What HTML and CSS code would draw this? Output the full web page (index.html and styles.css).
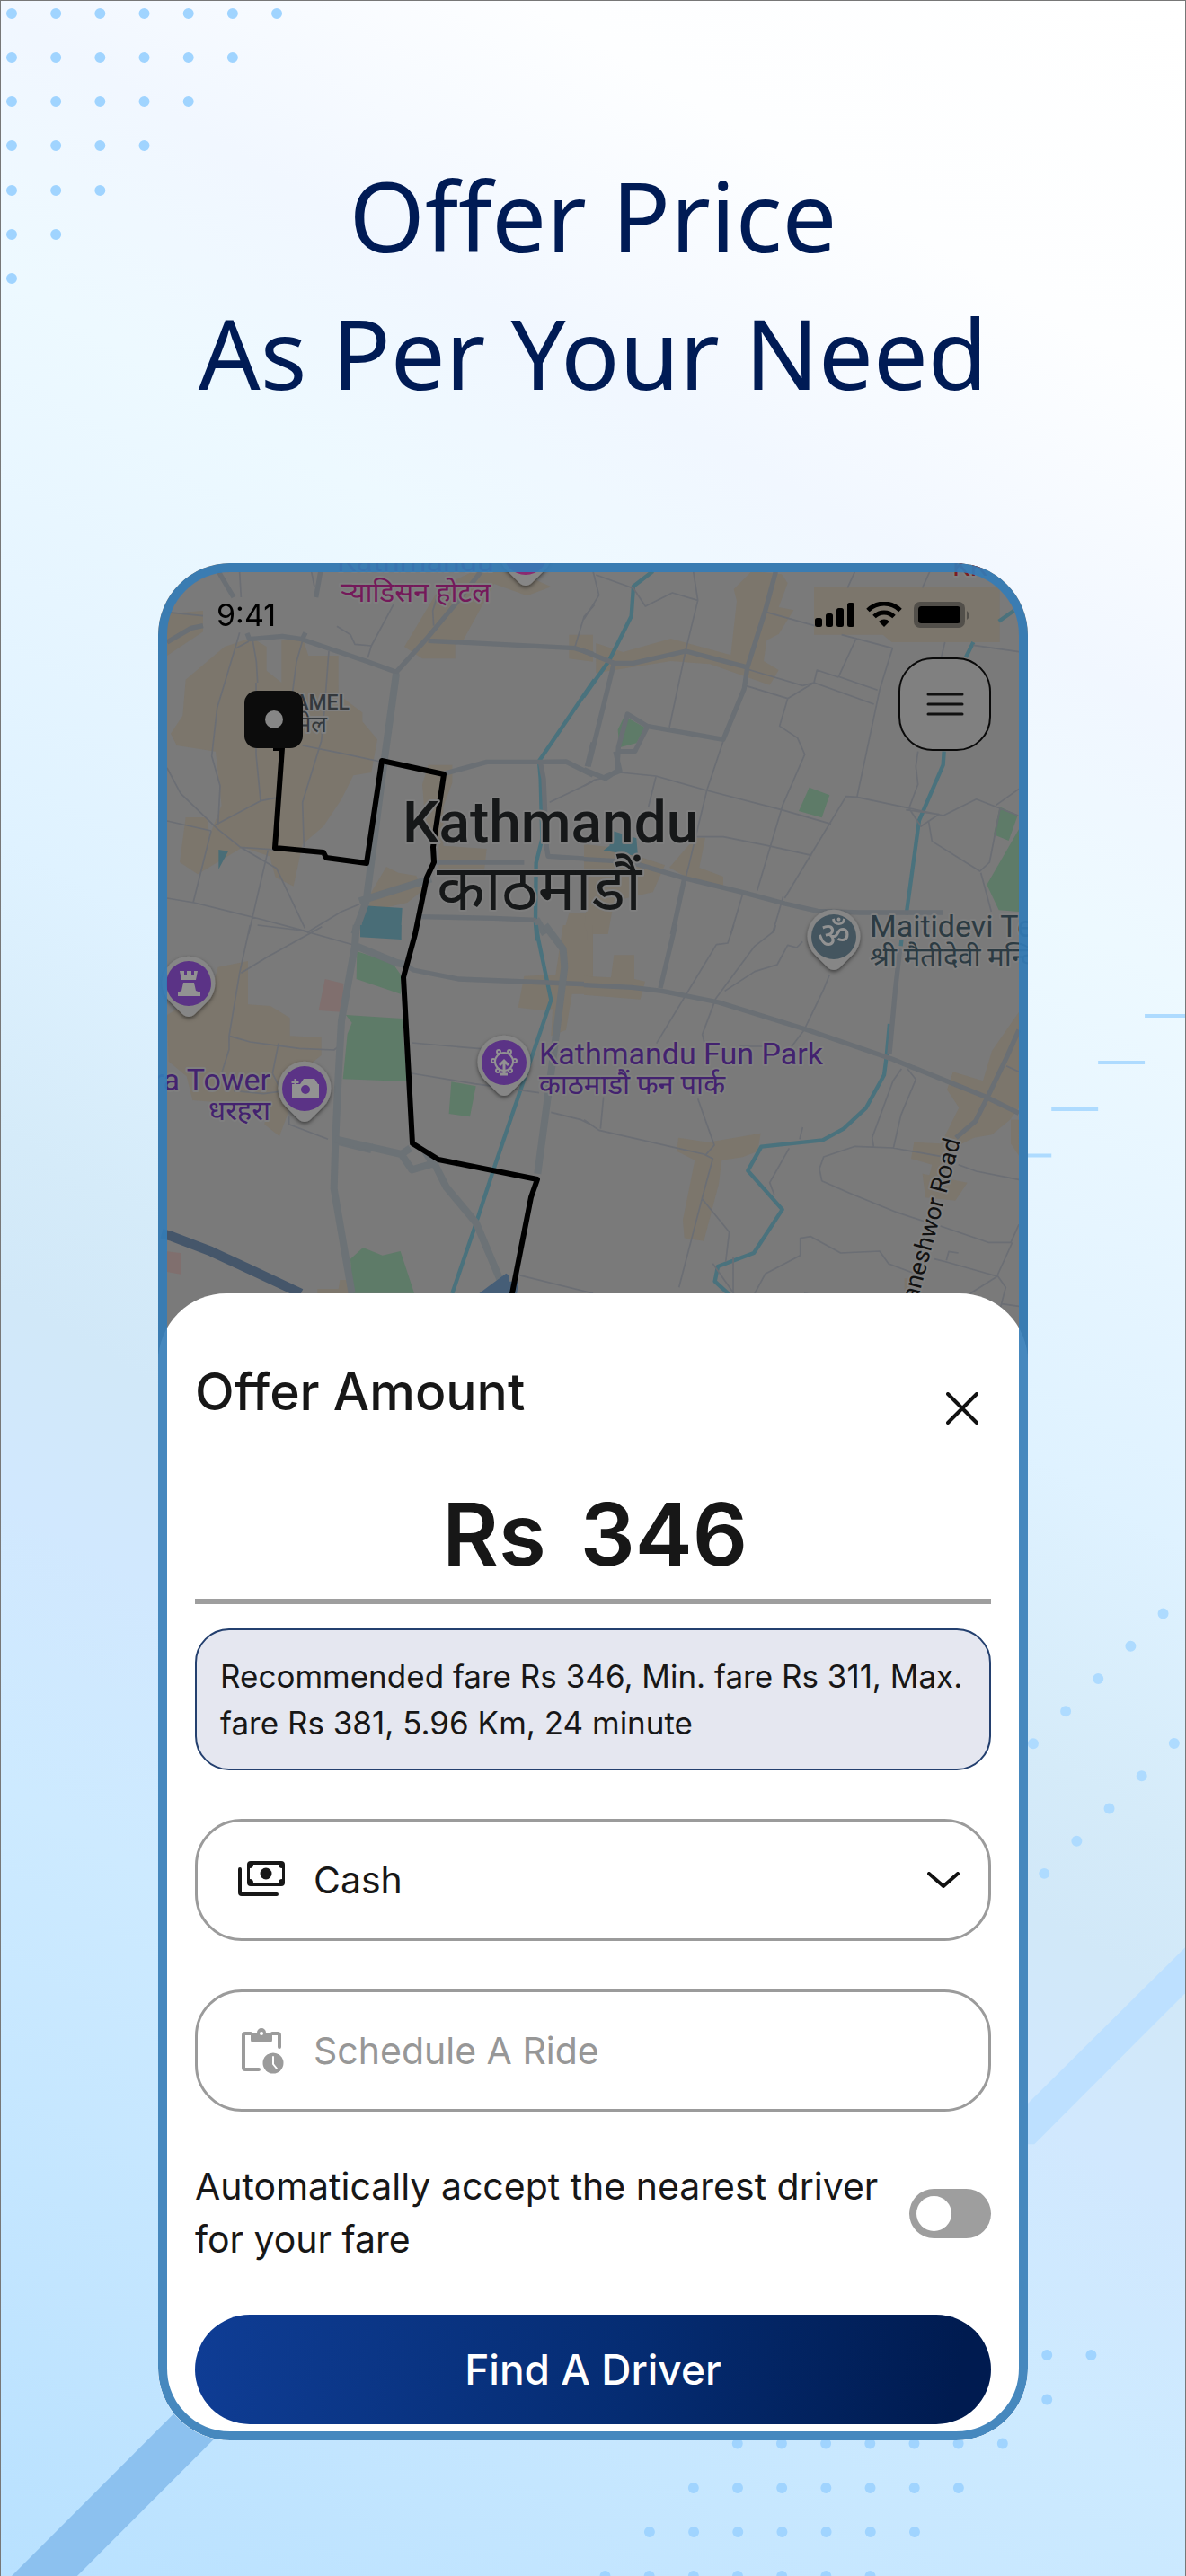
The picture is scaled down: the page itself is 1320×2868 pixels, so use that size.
FILE: index.html
```html
<!DOCTYPE html>
<html lang="en">
<head>
<meta charset="utf-8">
<meta name="viewport" content="width=device-width, initial-scale=1">
<title>Offer Price As Per Your Need</title>
<link rel="stylesheet" href="styles.css">
</head>
<body>
<div class="poster">
  <svg class="decor" viewBox="0 0 1320 2868" preserveAspectRatio="none" aria-hidden="true">
    <g class="decor-dots">
      <path d="M12 14h296M12 63h247M12 112h198M12 161h149M12 211h100M12 260h50M12 309h1"/>
      <path d="M1166 2622h50M1166 2671.500h1M821 2720.500h296M772 2770h296M723 2819h296M673.500 2868h296"/>
    </g>
    <path class="decor-diagonal" d="M1150.700 1941l182-182M1163 2085.600l182-182"/>
    <path class="decor-dash" d="M1275 1130.500h45M1223 1182.500h52M1171 1234.500h52M1119 1286h52"/>
    <path class="band-light" d="M1320 2168L1100 2386v1h52l168-168z"/>
    <path class="band-strong" d="M12 2868L240 2640h73L85 2868z"/>
  </svg>

  <h1 class="headline">Offer Price<br>As Per Your Need</h1>

  <main class="phone">
    <section class="map" aria-label="Map of Kathmandu">
      <svg class="map-canvas" viewBox="176 627 968 900">
        <defs>
          <g id="pin"><path d="M0 37C-4 37-7 34-10 31L-21 20A29.500 29.500 0 1 1 21 20L10 31C7 34 4 37 0 37z"/></g>
          <filter id="shade" x="-30%" y="-30%" width="160%" height="160%"><feDropShadow dx="0" dy="2" stdDeviation="2" flood-opacity=".5"/></filter>
        </defs>
        <rect x="176" y="627" width="968" height="900" fill="#7a7a7a"/>

        <!-- north-west quarter -->
        <g transform="translate(160 610) scale(.33333)">
          <g class="built">
            <path d="M78 220l120-10v70l-120 80zM270 330l90-30 50 30v80l50 40v-140l70-10 20 60h100v130l80 60v30l50 60-20 110-60 10-40 80-60 90-70 60-30 140-60-30-20-70-90-30-150 90-60-40 20-150h70l10 60 40-100-20-180-130-20-20-40 40-60 10-120z"/>
            <path d="M990 130l130-60 60-20 180 80-80 30-110-40-110 200h-20v50h-110l-60-40zM930 790l20-65h80v60l-30 80v130l145 10-10 90-150-20v-100h-40zM1420 290h80v90l-80-10zM760 1150l50-85 40 20 60 10 20 50-50 40-130 30z"/>
            <path d="M1400 1290l20-70h80v70z"/>
          </g>
          <path class="water" d="M250 1008l32 5-32 60zM735 1195l128 8-5 90h-135z"/>
          <path class="river" d="M1505 440L1320 712l5 60 5 200-20 80-2 200 5 60"/>
          <path class="minor" d="M320 80l5 85M560 80l10 50M78 215l120 12M380 450l-4-70-12-70M320 283l-15 52-60 200-18 160 28 100-7 130M308 335l42-22M530 310l-20 70-30 230M618 345l-15 200-10 100-63 205 5 150M375 450v240l15 155 60-12M240 925l150-80M78 735l45 85 125 120 75 60 120 70 95 200M225 945l-60 240M78 912l147 33M320 1000l120 8M415 1010l-65 280M78 1170l90 15 230 57 150 40M530 660l130 26 130 28M545 1285l115-70 60-25M645 262l45 28 15 32 55 5 75-140M760 327l-12 40M980 160l-15 50 3 50M1440 330l30-100 35-40M1355 850l145-70"/>
          <path class="major" d="M78 315l80-47 40-8M250 80l50 85M590 80l-15 85M540 283l-10 20M345 285l8 20 110-10 65 10 220 75 95 35 100-110 100-120 90-115M950 310l490 25 60 20M845 415l-45 300M1000 755l145-40h175l90-1 90 45M1500 650l-20 80M1325 720l10 50 10 230 5 30 150 10M970 1050h300M920 1232l250 5 140 6"/>
          <path class="trunk" d="M843 420l-40 290-60 470-40 110M720 1180l240-75M1310 1240l30 50"/>
        </g>

        <!-- north-east quarter -->
        <g transform="translate(650 610) scale(.33333)">
          <g class="built">
            <path d="M560 78l100 10 20 30-30 80 50 10-50 80-40 20-10 70 50 30-30 50-200-70-130-10-250 40v-100l90 30 160-45 200 55 20-180-10-40zM375 968h30l-20 100 80 30v40l-90-20-90-50 60-70zM768 130h620v185h-360l-30-25h-230z"/>
            <path d="M0 1290l10-120-10-40v-140l90 10 180 60-40 90-130 30-20 110z"/>
          </g>
          <path class="green" d="M135 562l68 38-28 52-57 15-5-60zM752 800l68 26-26 75-77-22zM1388 865l60 28-30 85-50-20zM1452 940v275l-67-5-40-85z"/>
          <path class="water" d="M95 945l80 25 5 60-115-20 20-15z"/>
          <path class="river" d="M230 78l-65 50-7 100-75 150-85 120M1435 210l-50 35M1300 315l-25 50M1202 680l-3 45-80 185-43 315"/>
          <path class="minor" d="M30 78l20 80-50 80M40 90l125 45 40 60 90-45 85 25-15-97M380 175l-40 165-55 260M610 215l160 45M905 78l-25 55M1155 78l-25 55M860 290l170 45M910 300l-60 130 130 45M545 405l185 55M1030 335l-28 90-15 50-75 355M730 460l38-10 10-42 72 24M768 450l-88 53-140-43M768 450l200 72M680 503l-27 92 60 40 24 55-74 170-85 285M120 750l120 12 170 48 250 65 165 47M240 765l-25 100M465 645l-55 165-60 250-60 230M375 965h90l150 30 145 32M0 795l35-20 35-8M910 832l-35-2-205 340M910 832l290 62 110-55 140 55M1115 680l-7 50 7 60-30 80 40 60 60-40-110-15M1375 860l77-55M1150 910l12 70 160 100 32-30 35-180M1325 1085l35 130M1205 315l-12 50M1300 325l152 22M530 1155l-40 135M665 1165l-35 120"/>
          <path class="major" d="M0 345l100 40h65l175-40 210 55M640 80l-35 130-60 190-10 70-70 170-255-45-65-40-30 110-5 80-38 25-72-30M100 385L15 730M110 680h60l40-80M105 680l15 65-50 20M335 1105l-40 185"/>
          <path class="major" d="M0 1040l150 8 185 55 205 50 130 35 110 25 140 5h280"/>
        </g>

        <!-- south-west quarter -->
        <g transform="translate(160 1030) scale(.33333)">
          <g class="built">
            <path d="M78 300l150-90 20-70 100-20v145l75 5 65 40v60l105 5v60l-50 40-50 20-10 130-30 80-50-40 10-60-250-20-20-80-60-50zM1270 170l120-5v110l-60 10-80-10zM1400 0h100v230h-70l-20 120-50 20 10-170zM580 1230v-15h70l5-30h35v45z"/>
          </g>
          <path class="rose" d="M605 180l62 15-5 95-78-5zM78 1090l48 6-3 70-45-8z"/>
          <path class="green" d="M712 88l118 38 28 40v64l-148-50zM675 300l188 12 15 210-213-8 15-150 15-38zM1027 523l82 15-20 102-70-10zM690 1115l42-38 65 26 60-14 46 140h-205z"/>
          <path class="water" d="M723 0h137v48l-137-8z"/>
          <path class="river" d="M1310 0l8 50 42 200-190 560-62 190-78 230"/>
          <path class="minor" d="M355 0l-35 160-35 210v45l-25 80M325 160l90-55 180-100M380 0l150 18 170 48M285 370l70 20 165 22 115 5 20-15M450 395l-20 100 30 60-60 8-100-10M485 640v25l130 50M895 393l230 20M895 495l210 35 215 30M1360 625l100 25 40 20M1250 1168l250 62"/>
          <path class="major" d="M870 130l30 20 150 30 450 18"/>
          <path class="trunk" d="M710 0l-5 70-45 250-10 180-10 220-5 160 60 350M705 68l140 58 25 5M640 720l120 30M1340 0l60 80 5 60-30 240-60 450"/>
          <path class="trunk" d="M640 715l220 50 30-20M860 765l35 52 70-20-25-40M760 745l10-5M970 795l40 80 100 120 80 190"/>
          <path class="rail" d="M60 1030l35 10 130 50 130 60 170 80"/>
          <path fill="#465e77" d="M1120 1230l40-30 50-37 10 7-5 60zM1215 1230v-40h36l-5 40z"/>
        </g>

        <!-- south-east quarter -->
        <g transform="translate(650 1030) scale(.33333)">
          <g class="built">
            <path d="M0 170l90 5 10-75h68v80l36 8-16 60-188-15zM315 710l100 15 175-30-10 60-50 20-70 10-10 80-50 190-65-10-5-60 40-200-60-30zM1452 290v320l-30 40-60 50-60 10-80 40-20 90-60 40 20-80-70-20 10-55 90 5 60-120-40-60 20-60 100 30 30-100zM1130 830l150 30-40 60-100-10zM1070 1180h30l-10 50h-20zM1425 650h27v120l-27-40z"/>
            <path d="M0 0l10 20v30h-10z"/>
          </g>
          <path class="river" d="M1060 50l-2 20M1020 330l-10 110-8 60-60 110-75 70-70 38-205 22-45 80 115 130-95 145-120 45-10 50 55 50"/>
          <path class="minor" d="M500 0l-20 60-38 5-200 330M640 0l-5 20-65 50-130 175-45 120 15 60M470 220l100-65 75-23 35-65 30 8 20-20M820 165l-20 50-65 135-60 80M600 405h-80M65 575l-10 105M0 650l50 35 350 80 30 15-35 130-78 300M380 580l55 155-28 32M395 915l90 110-12 100M730 675l-10 40M685 745l-65 115 15 40M1060 480l-28 40-70 190 5 30M1080 480l28 35-50 120-25 110M1190 772l-160-28-125-5-105 35-14 40 8 40 90 40 160 65 90 30M1250 800l60 22 142 28M1190 1005l160 55h75l27-60M1410 470l42 20M1430 1060l-50 110 28 40-18 70M570 1230l35-65 117-62v-57l35-6 100 55 130-6 30 42 80 30M1170 1115l40 10 170 48M1210 1120l8-30 32 5M1380 1173l-90 57M1395 1265l57 8M498 1110v120M430 1130l70 100M735 1230l60 8"/>
          <path class="major" d="M305 0l-50 210M0 200l160 8 100 12 190 38 290 90 290 100 310 125 112 55M1055 80l-15 130-20 220M1452 350l-40 90-65 135-40 80-65 55"/>
        </g>

        <path class="route" d="M304 833h10L306 944l54 5 3 6 45 6L425 847l69 15-12 81 1 17-8 17-13 63-13 48 10 185 29 18 110 22-7 20-21 107v60"/>

        <text class="place city" x="448" y="938">Kathmandu</text>
        <text class="place city-local" x="486" y="1013">काठमाडौं</text>
        <text class="place poi hotel" x="375" y="636">Kathmandu</text>
        <text class="place local hotel" x="379" y="670">र्‍याडिसन होटल</text>
        <text class="place local hospital" x="1060" y="641">KK</text>
        <text class="place district" x="389" y="790" text-anchor="end">THAMEL</text>
        <text class="place district-local" x="364" y="815" text-anchor="end">थमेल</text>
        <text class="place poi temple" x="968" y="1043">Maitidevi Temple</text>
        <text class="place local temple" x="968" y="1076">श्री मैतीदेवी मन्दिर</text>
        <text class="place poi park" x="600" y="1185">Kathmandu Fun Park</text>
        <text class="place local park" x="600" y="1218">काठमाडौं फन पार्क</text>
        <text class="place poi park" x="301" y="1214" text-anchor="end">Dharahara Tower</text>
        <text class="place local park" x="301" y="1247" text-anchor="end">धरहरा</text>
        <text class="place street" transform="translate(1069 1270) rotate(-75)" text-anchor="end">Baneshwor Road</text>

        <g fill="#868686" filter="url(#shade)">
          <use href="#pin" x="585" y="615"/><use href="#pin" x="210" y="1095"/><use href="#pin" x="339" y="1212"/><use href="#pin" x="561" y="1183"/><use href="#pin" x="928" y="1043"/>
        </g>
        <circle cx="585" cy="615" r="25" fill="#8a2a70"/>
        <circle cx="928" cy="1043" r="25" fill="#44555f"/>
        <g fill="#5b3386"><circle cx="210" cy="1095" r="25"/><circle cx="339" cy="1212" r="25"/><circle cx="561" cy="1183" r="25"/></g>
        <text class="om" x="928" y="1055" text-anchor="middle">ॐ</text>
        <g fill="#929292">
          <path d="M200 1081h5v4h3v-4h5v4h3v-4h4l-2 10h-16zM204 1094h12l2 9 5 2v4h-25v-4l4-2z"/>
          <path fill-rule="evenodd" d="M325 1207h9l4-6h12l4 6h1v16h-30zM340 1208a5 5 0 1 0 0 10 5 5 0 0 0 0-10z"/>
          <path d="M327.500 1201h2v3h3v2h-3v3h-2v-3h-3v-2h3z"/>
        </g>
        <g fill="none" stroke="#929292" stroke-width="2">
          <circle cx="561" cy="1182" r="10"/><path stroke-width="3" d="M561 1182v14M557 1196h8M556 1186l5-5 5 5"/>
          <circle cx="555" cy="1171" r="2"/><circle cx="567" cy="1171" r="2"/><circle cx="549" cy="1181" r="2"/><circle cx="573" cy="1181" r="2"/><circle cx="554" cy="1192" r="2"/><circle cx="568" cy="1192" r="2"/>
        </g>
        <rect x="272" y="769" width="65" height="64" rx="14" fill="#0c0c0c"/>
        <circle cx="305" cy="801" r="10" fill="#868686"/>
      </svg>

      <div class="status">
        <time class="clock">9:41</time>
        <svg class="status-icons" viewBox="0 0 172 30" role="img" aria-label="Signal, Wi-Fi and battery">
          <rect x="0" y="18" width="8" height="10" rx="2.500"/><rect x="12" y="13" width="8" height="15" rx="2.500"/><rect x="24" y="7" width="8" height="21" rx="2.500"/><rect x="36" y="1" width="8" height="27" rx="2.500"/>
          <g fill="none" stroke="#000" stroke-width="5"><path d="M59 9.500a25.500 25.500 0 0 1 36 0"/><path d="M66 16.500a15.500 15.500 0 0 1 22 0"/></g>
          <path d="M77 28l-6-6a8.500 8.500 0 0 1 12 0z"/>
          <rect x="110" y="0" width="57" height="29" rx="7" fill="#524f4a"/><rect x="115" y="5" width="47" height="19" rx="3.500"/><path fill="#524f4a" d="M169 10q6 5 0 10z"/>
        </svg>
      </div>
      <button class="menu" type="button" aria-label="Menu">
        <svg viewBox="0 0 42 28"><path d="M2 3h38M2 14h38M2 25h38"/></svg>
      </button>
    </section>

    <form class="sheet">
      <header class="sheet-head">
        <h2 class="sheet-title">Offer Amount</h2>
        <button class="close" type="button" aria-label="Close"><svg viewBox="0 0 36 36"><path d="M2 2l32 32M34 2L2 34"/></svg></button>
      </header>

      <div class="amount">
        <label for="amount">Rs</label>
        <input id="amount" type="text" inputmode="numeric" value="346">
      </div>

      <p class="fare">Recommended fare Rs 346, Min. fare Rs 311, Max. fare Rs 381, 5.96 Km, 24 minute</p>

      <div class="stack">
        <div class="field">
          <svg class="field-icon" viewBox="0 0 54 54" aria-hidden="true">
            <path fill="none" stroke="#171717" stroke-width="4" stroke-linecap="round" stroke-linejoin="round" d="M3 15v26q0 2 2 2h39"/>
            <path fill="#171717" fill-rule="evenodd" d="M15 6h34q4 0 4 4v20q0 4-4 4H15q-4 0-4-4V10q0-4 4-4zm3 4q0 4-4 4v12q4 0 4 4h28q0-4 4-4V14q-4 0-4-4z"/>
            <circle cx="32" cy="20" r="6.500" fill="#171717"/>
          </svg>
          <select class="field-control" aria-label="Payment method"><option>Cash</option></select>
          <svg class="chevron" viewBox="0 0 36 18" aria-hidden="true"><path d="M2 2l16 14L34 2"/></svg>
        </div>

        <div class="field">
          <svg class="field-icon" viewBox="0 0 54 54" aria-hidden="true" fill="#9b9b9b">
            <path fill="none" stroke="#9b9b9b" stroke-width="4" stroke-linecap="round" stroke-linejoin="round" d="M15 8H9q-2 0-2 2v36q0 2 2 2h15M39 8h6q2 0 2 2v13"/>
            <path fill-rule="evenodd" d="M15 7h7a5 5 0 0 1 10 0h7v8q0 3-3 3H18q-3 0-3-3zm12-1a2 2 0 1 0 0 4 2 2 0 0 0 0-4z"/>
            <circle cx="40" cy="41" r="11.500"/><path fill="none" stroke="#fff" stroke-width="2" stroke-linecap="round" d="M40 34v8l4 5"/>
          </svg>
          <input class="field-control" type="text" placeholder="Schedule A Ride" aria-label="Schedule a ride">
        </div>

        <div class="auto">
          <label class="auto-label" for="auto">Automatically accept the nearest driver for your fare</label>
          <input class="toggle" id="auto" type="checkbox" role="switch">
        </div>

        <button class="submit" type="submit">Find A Driver</button>
      </div>
    </form>
  </main>
</div>
</body>
</html>
```
FILE: styles.css
```css
* { box-sizing: border-box; }

body {
  margin: 0;
  color: #171717;
  font-family: Inter, "Noto Sans", sans-serif;
}

h1, h2, p { margin: 0; font-weight: inherit; }

button, input, select {
  border: 0;
  padding: 0;
  margin: 0;
  background: none;
  color: inherit;
  font: inherit;
}

.poster {
  position: relative;
  min-height: 100vh;
  padding: 162px 175px 151px;
  border: 1px solid #777;
  border-bottom: 0;
  overflow: hidden;
  background: linear-gradient(211deg, #fff 0%, #fdfeff 12%, #f1f7ff 22%, #edf9ff 30%, #e6f5ff 39%, #dff2ff 47%, #d5ebf9 56%, #d1e8f8 61%, #d1e8fe 67%, #cdeaff 76%, #c2e5ff 90%, #b8e1ff 100%);
}

/* Background ornaments */
.decor {
  position: absolute;
  inset: 0;
  width: 100%;
  height: 100%;
}
.decor-dots, .decor-diagonal, .decor-dash { fill: none; }
.decor-dots {
  stroke: #a0d4ff;
  stroke-width: 12;
  stroke-linecap: round;
  stroke-dasharray: 0 49.25;
}
.decor-diagonal {
  stroke: #aedbff;
  stroke-width: 12;
  stroke-linecap: round;
  stroke-dasharray: 0 51.2;
}
.decor-dash { stroke: #aedbff; stroke-width: 4; }
.band-light { fill: #bde0ff; }
.band-strong { fill: #8cc1ef; }

.headline {
  position: relative;
  margin-bottom: 158px;
  color: #001b55;
  font-family: "Noto Sans", "Open Sans", sans-serif;
  font-size: 108px;
  line-height: 153px;
  text-align: center;
}

.phone {
  position: relative;
  overflow: hidden;
  border-radius: 80px;
  background: #fff;
}
.phone::after {
  content: "";
  position: absolute;
  inset: 0;
  border: 10px solid rgba(52, 124, 184, .91);
  border-radius: inherit;
  pointer-events: none;
}

/* Map */
.map { position: relative; }
.map-canvas { display: block; width: 100%; height: auto; }
.built { fill: #7c766c; }
.green { fill: #5e7b68; }
.water { fill: #496d77; }
.rose { fill: #806f6e; }
.river, .minor, .major, .trunk, .rail, .route { fill: none; stroke-linejoin: round; }
.river { stroke: #4a727d; stroke-width: 13; }
.minor { stroke: #6b6e74; stroke-width: 5; }
.major { stroke: #6a6f74; stroke-width: 16; }
.trunk { stroke: #6c7276; stroke-width: 24; }
.rail { stroke: #45566a; stroke-width: 32; }
.route { stroke: #000; stroke-width: 6; }
.place {
  font-family: Roboto, "Noto Sans Devanagari", "Noto Sans", sans-serif;
  stroke: #7f7f7f;
  stroke-width: 4px;
  stroke-linejoin: round;
  paint-order: stroke;
}
.city { font-size: 64px; font-weight: 500; fill: #161819; }
.city-local { font-size: 70px; fill: #161819; }
.poi { font-size: 34px; }
.local { font-size: 31px; }
.district { font-size: 23px; font-weight: 500; fill: #34383c; }
.district-local { font-size: 26px; fill: #34383c; }
.street { font-size: 27px; fill: #111; }
.park { fill: #43226f; }
.temple { fill: #2c3b43; }
.hotel { fill: #74195a; }
.hospital { fill: #7a1d24; }
.om { font-size: 40px; fill: #929292; font-family: "Noto Sans Devanagari", "Noto Sans", sans-serif; }

.status {
  position: absolute;
  inset: 41px 65px auto;
  display: flex;
  align-items: center;
  justify-content: space-between;
}
.clock { color: #000; font-size: 34px; line-height: 34px; }
.status-icons { width: 172px; height: 30px; }

.menu {
  position: absolute;
  top: 105px;
  right: 41px;
  display: grid;
  place-items: center;
  width: 103px;
  height: 104px;
  border: 2px solid #0a0a0a;
  border-radius: 38px;
  background: #808080;
}
.menu svg { width: 42px; height: 28px; }
.menu path, .close path, .chevron path {
  fill: none;
  stroke: #111;
  stroke-width: 4;
  stroke-linecap: round;
  stroke-linejoin: round;
}
.menu path { stroke-width: 3; }

/* Offer sheet */
.sheet {
  position: relative;
  margin-top: -87px;
  padding: 78px 41px 18px;
  border-radius: 76px 76px 0 0;
  background: #fff;
}
.sheet-head {
  display: flex;
  align-items: flex-end;
  justify-content: space-between;
  padding-right: 14px;
}
.sheet-title {
  padding-bottom: 4px;
  font-size: 57px;
  font-weight: 500;
  line-height: 64px;
}
.close { width: 36px; height: 36px; }
.close svg { display: block; }

.amount {
  display: flex;
  align-items: baseline;
  justify-content: center;
  gap: 38px;
  margin-top: 62px;
  padding-bottom: 12px;
  border-bottom: 6px solid #9e9e9e;
  font-size: 96px;
  font-weight: 600;
  line-height: 120px;
}
.amount input { width: 182px; height: 120px; }

.fare {
  margin: 27px 0 54px;
  padding: 25px 16px 25px 26px;
  border: 2px solid #24406f;
  border-radius: 38px;
  background: #e5e7f0;
  font-size: 35px;
  line-height: 52px;
}

.stack { display: grid; gap: 54px; }

.field {
  display: flex;
  align-items: center;
  gap: 31px;
  height: 136px;
  padding: 0 32px 0 44px;
  border: 3px solid #9b9b9b;
  border-radius: 52px;
  font-size: 41px;
}
.field-icon { flex: none; width: 54px; height: 54px; }
.field-control {
  flex: 1;
  min-width: 0;
  height: 100%;
  appearance: none;
  outline: 0;
}
.field-control::placeholder { color: #979797; opacity: 1; }
.chevron { flex: none; width: 36px; height: 18px; }

.auto {
  display: flex;
  align-items: center;
  justify-content: space-between;
  gap: 16px;
}
.auto-label { flex: 1; font-size: 41px; line-height: 59px; }
.toggle {
  flex: none;
  display: flex;
  align-items: center;
  width: 91px;
  height: 55px;
  padding: 8px;
  border-radius: 28px;
  background: #9e9e9e;
  appearance: none;
}
.toggle::before {
  content: "";
  width: 39px;
  height: 39px;
  border-radius: 50%;
  background: #fff;
}
.toggle:checked { justify-content: flex-end; background: #0f3d95; }

.submit {
  height: 122px;
  border-radius: 61px;
  background: linear-gradient(100deg, #0f3d95, #052c72 55%, #001b50 95%);
  color: #fff;
  font-size: 46px;
  font-weight: 500;
}
```
